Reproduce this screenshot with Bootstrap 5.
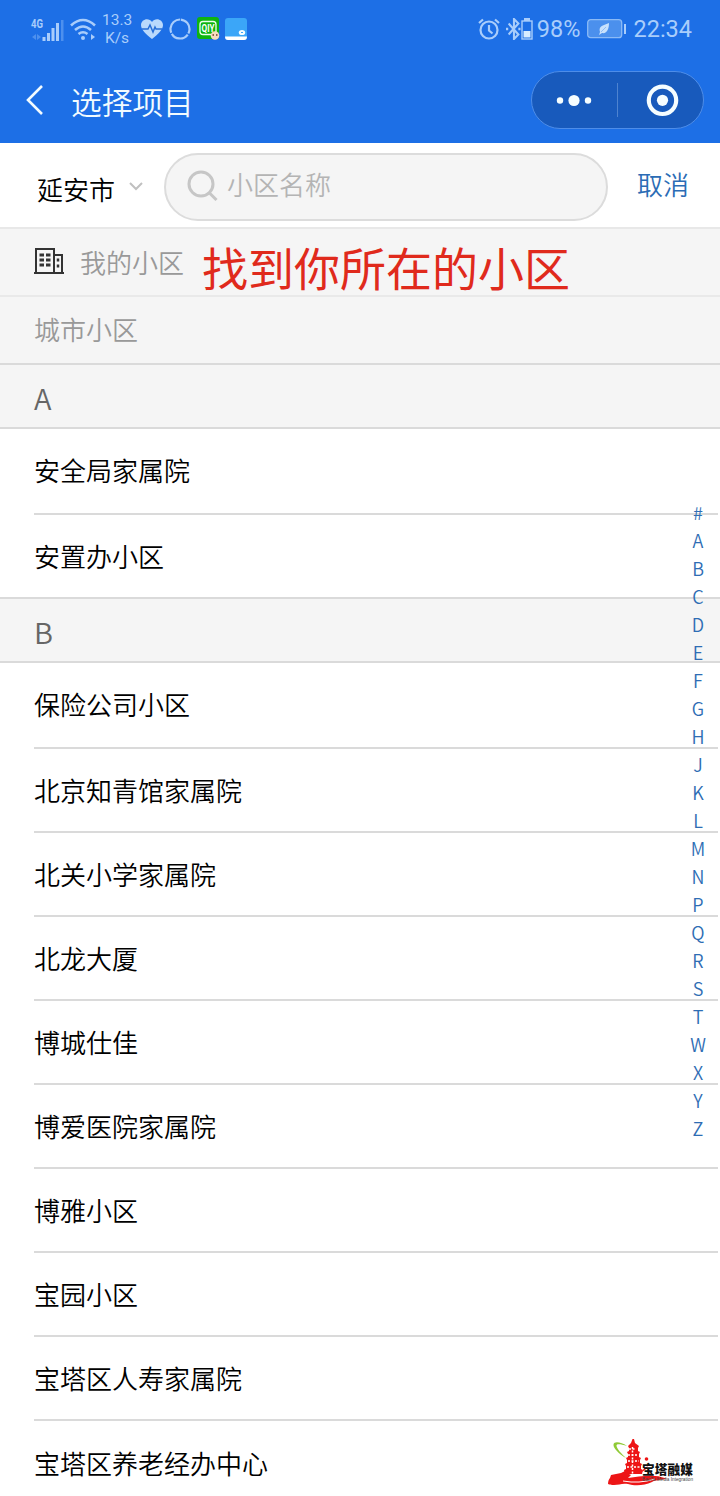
<!DOCTYPE html>
<html lang="zh-CN">
<head>
<meta charset="utf-8">
<meta name="viewport" content="width=device-width, initial-scale=1">
<title>选择项目</title>
<link href="https://cdn.jsdelivr.net/npm/bootstrap@5.3.0/dist/css/bootstrap.min.css" rel="stylesheet">
<style>
  body { font-family: "Noto Sans CJK SC", sans-serif; font-size: 26px; font-weight: 350; line-height: 1; color: #000; background: #fff; }
  svg { display: block; flex: none; }
  .screen { width: 720px; height: 1496px; }
  .app-header { height: 143px; background: #1d6fe6; }
  .status { height: 57px; padding: 0 28px 0 31px; color: #a9cdfb; font-family: Roboto, sans-serif; font-weight: 400; }
  .speed { font-size: 15.500px; line-height: 18px; width: 30px; margin: 0 9px 0 7px; padding-top: 1px; }
  .status-num { font-size: 23.500px; padding-top: 2px; }
  .title-bar { height: 86px; padding: 0 16px 1px 25px; color: #f2fbff; }
  .page-title { font-size: 30.7px; margin-left: 27px; padding-top: 3px; }
  .capsule { width: 173px; height: 58px; background: #185abc; border: 1px solid #4e8de8; border-radius: 29px; }
  .search-row { height: 86px; padding: 3px 31px 0 37px; border-bottom: 2px solid #e8e8e8; }
  .search-box { width: 444px; height: 68px; margin-left: 21px; padding-left: 21px; background: #f5f5f5; border: 2px solid #dcdcdc; border-radius: 34px; color: #b4b4b4; }
  .cancel { color: #2b6cb5; margin-left: 29px; }
  .mine { height: 68px; padding-left: 34px; background: #f5f5f5; border-bottom: 2px solid #e9e9e9; color: #999; }
  .note { color: #e02a1c; font-size: 46px; font-weight: 400; margin-left: 18px; padding-top: 7px; }
  .city { height: 68px; padding: 0 0 2px 34px; background: #f5f5f5; border-bottom: 2px solid #dadada; color: #999; }
  .group-head { height: 64px; padding: 2px 0 0 34px; background: #f5f5f5; border-bottom: 2px solid #dadada; color: #666; font-size: 29px; }
  .estates .list-group-item { height: 84px; margin: 0 2px 0 34px; padding: 0; border: 0; border-bottom: 2px solid #dadada; color: #000; border-radius: 0; background: none; }
  .estates .list-group-item:first-child { height: 86px; padding: 0 0 2px; }
  .estates.closed { border-bottom: 2px solid #dadada; border-radius: 0; }
  .estates.closed .list-group-item:last-child { height: 82px; border-bottom: 0; }
  .letters { top: 498px; right: 12px; width: 20px; font-size: 18px; line-height: 28px; color: #2e6db4; }
  .brand { left: 606px; top: 1436px; }
</style>
</head>
<body>
<main class="screen position-relative overflow-hidden">
  <header class="app-header">
    <div class="status d-flex align-items-center">
      <svg width="33" height="26" viewBox="0 0 33 26" fill="currentColor"><text x="0" y="12" font-size="13" font-weight="700" textLength="12" lengthAdjust="spacingAndGlyphs">4G</text><path d="M11.500 21h3v4h-3zM16 17h3v8h-3zM20.500 12h3v13h-3zM25 7h3v18h-3z"/><path opacity=".35" d="M30 4h2.500v21H30zM1 21l4-3v6zM10 21l-4-3v6z"/></svg>
      <svg width="28" height="24" viewBox="0 0 28 24" fill="none" stroke="currentColor" stroke-width="2.600" style="margin-left:5px;margin-right:-2px"><path d="M2 8.500Q14-2.500 26 8.500M6 13Q14 6 22 13M9.500 17Q14 13.500 18.500 17"/><circle cx="14" cy="21" r="2" fill="currentColor" stroke="none"/><path d="M22 17v6l4-3z" fill="currentColor" stroke="none"/></svg>
      <div class="speed text-center">13.3<br>K/s</div>
      <svg width="22" height="20" viewBox="0 0 22 20"><path fill="#bad9fc" d="M11 20C5 15 0 11 0 6 0 0 8-2 11 3c3-5 11-3 11 3 0 5-5 9-11 14z"/><path d="M1 10h6l2-4 3 7 2-5 1 2h6" fill="none" stroke="#286fd7" stroke-width="1.500"/></svg>
      <svg width="22" height="22" viewBox="0 0 22 22" fill="none" stroke="currentColor" stroke-width="2.200" style="margin-left:6px"><circle cx="11" cy="11" r="9.500" stroke-dasharray="18.700 1.200" transform="rotate(-85 11 11)"/></svg>
      <svg width="23" height="23" viewBox="0 0 23 23" style="margin-left:6px"><rect width="22" height="22" rx="3" fill="#0eb40f"/><rect x="3" y="4.500" width="16" height="13" rx="3" fill="none" stroke="#eaffea" stroke-width="1.300"/><text x="4.500" y="15" fill="#fff" font-size="10.500" font-weight="700" textLength="13" lengthAdjust="spacingAndGlyphs">QIY</text><circle cx="18" cy="18.500" r="4.300" fill="#f5dcc0"/><path d="M15.500 18h1.500m2 0h1.500" stroke="#6c3829" stroke-width="1.500"/></svg>
      <svg width="22" height="22" viewBox="0 0 22 22" style="margin-left:5px"><rect width="22" height="22" rx="3" fill="#3ba6f8"/><path d="M0 18.500h22q0 3.500-3 3.500H3q-3 0-3-3.500z" fill="#fff"/><ellipse cx="17" cy="14.500" rx="3.200" ry="2.600" fill="#f5fcff"/><path d="M16 14.500h2" stroke="#3ba6f8"/></svg>
      <div class="d-flex align-items-center ms-auto">
        <svg width="22" height="22" viewBox="0 0 22 22" fill="none" stroke="currentColor" stroke-width="2.200"><circle cx="11" cy="12" r="8.500"/><path d="M11 7v5.500l3.500 3M1 5l4-3.500M21 5l-4-3.500"/></svg>
        <svg width="15" height="22" viewBox="0 0 17 22" preserveAspectRatio="none" fill="none" stroke="currentColor" stroke-width="2.300" style="margin-left:6px"><path d="M3 5.500l11 11L9 21V1l5 4.500-11 11M0 11h2.500m11.500 0h2.500"/></svg>
        <svg width="12" height="22" viewBox="0 0 12 22"><path d="M3 0h6v3H3z" fill="currentColor"/><rect x="1" y="3" width="10" height="18" fill="none" stroke="currentColor" stroke-width="1.400"/><path d="M2.500 13h7v6.500h-7z" fill="#d9edff"/></svg>
        <span class="status-num" style="margin-left:4px">98%</span>
        <svg width="40" height="20" viewBox="0 0 40 20" style="margin-left:7px"><rect x=".7" y=".7" width="34" height="18" rx="3" fill="#4b90ed" stroke="#8bbaf6" stroke-width="1.300"/><path d="M37 5h2v10h-2z" fill="#a9cdfb"/><path d="M12 16l1-3c-2-6 4-7 9-9 0 6-2 11-7 10z" fill="#c8e1fc"/><path d="M14 13l5-5" stroke="#78acf2" stroke-width=".7"/></svg>
        <span class="status-num" style="margin-left:6px">22:34</span>
      </div>
    </div>
    <div class="title-bar d-flex align-items-center">
      <svg width="19" height="32" viewBox="0 0 19 32" fill="none" stroke="currentColor" stroke-width="2.600"><path d="M17 2L3 16l14 14"/></svg>
      <span class="page-title">选择项目</span>
      <div class="capsule d-flex align-items-center ms-auto">
        <svg width="171" height="56" viewBox="0 0 171 56" fill="#f5fdff"><circle cx="28" cy="28.500" r="3.200"/><circle cx="42" cy="28.500" r="5.600"/><circle cx="56" cy="28.500" r="3.200"/><path d="M85 11h1v34h-1z" fill="#4e83d0"/><circle cx="130.500" cy="28.300" r="13.700" fill="none" stroke="#f5fdff" stroke-width="4.200"/><circle cx="130.500" cy="28.300" r="5.600"/></svg>
      </div>
    </div>
  </header>

  <div class="search-row d-flex align-items-center">
    <span class="pt-1">延安市</span>
    <svg width="14" height="9" viewBox="0 0 14 9" fill="none" stroke="#c0c0c0" stroke-width="2" style="margin-left:14px"><path d="M1 1l6 6 6-6"/></svg>
    <div class="search-box d-flex align-items-center">
      <svg width="31" height="34" viewBox="0 0 31 34" fill="none" stroke="#c6c6c6" stroke-width="3"><circle cx="14" cy="14" r="12"/><path d="M21.500 22l8 8"/></svg>
      <span style="margin-left:9px;padding-bottom:5px">小区名称</span>
    </div>
    <span class="cancel" style="padding-bottom:5px">取消</span>
  </div>

  <div class="mine d-flex align-items-center">
    <svg width="30" height="28" viewBox="0 0 30 28" fill="none" stroke="#333" stroke-width="2"><path d="M2 25V1h18v24M20 7h8v18M0 25h30"/><path d="M5.500 7h4.500m2 0h4.500m-11 5h4.500m2 0h4.500m-11 5h4.500m2 0h4.500" stroke-width="3"/><path d="M24 10.500v3m0 3v3" stroke-width="2.500"/></svg>
    <span style="margin-left:16px">我的小区</span>
    <span class="note">找到你所在的小区</span>
  </div>
  <div class="city d-flex align-items-center">城市小区</div>

  <div class="group-head d-flex align-items-center">A</div>
  <ul class="estates closed list-group list-group-flush">
    <li class="list-group-item d-flex align-items-center">安全局家属院</li>
    <li class="list-group-item d-flex align-items-center">安置办小区</li>
  </ul>
  <div class="group-head d-flex align-items-center">B</div>
  <ul class="estates list-group list-group-flush">
    <li class="list-group-item d-flex align-items-center">保险公司小区</li>
    <li class="list-group-item d-flex align-items-center">北京知青馆家属院</li>
    <li class="list-group-item d-flex align-items-center">北关小学家属院</li>
    <li class="list-group-item d-flex align-items-center">北龙大厦</li>
    <li class="list-group-item d-flex align-items-center">博城仕佳</li>
    <li class="list-group-item d-flex align-items-center">博爱医院家属院</li>
    <li class="list-group-item d-flex align-items-center">博雅小区</li>
    <li class="list-group-item d-flex align-items-center">宝园小区</li>
    <li class="list-group-item d-flex align-items-center">宝塔区人寿家属院</li>
    <li class="list-group-item d-flex align-items-center">宝塔区养老经办中心</li>
  </ul>

  <nav class="letters position-absolute d-flex flex-column text-center">
    <span>#</span><span>A</span><span>B</span><span>C</span><span>D</span><span>E</span><span>F</span><span>G</span><span>H</span><span>J</span><span>K</span><span>L</span><span>M</span><span>N</span><span>P</span><span>Q</span><span>R</span><span>S</span><span>T</span><span>W</span><span>X</span><span>Y</span><span>Z</span>
  </nav>

  <svg class="brand position-absolute" width="100" height="56" viewBox="0 0 100 56">
    <path d="M20 22C13 18 7 12 7.500 8.500 8 5 15 6 21 10 15 8 10.500 7.500 10.500 9.500c0 3 4.500 8 9.500 12.500z" fill="#8fca35"/>
    <g fill="#ed1516">
      <path d="M26.500 3h1.500l1 4 4 3-1 2v3l2 1-1 2v3l2 1-1 2v3l2 1-1 2v3l2 1-1 4H19l-1-4 2-1v-3l-1-2 2-1v-3l-1-2 2-1v-3l-1-2 2-1v-3l-1-2 3-3z"/>
      <path d="M2 48c0-3 1-5 2-6l1-3 10-2 6-3 3 1-1 3 2 1-3 3c9-1 18-3 27-2 5 0 9 2 12 3-7 1-12 1-15 3-8 4-18 4-24 2-6-1-9 1-14 1s-5-1-6-1z"/>
      <circle cx="40.500" cy="23" r="1.800"/><path d="M42 30q-2 4-6 6 1-4 6-6z"/>
    </g>
    <path d="M23 13h7M22 19h10M22 25h11M21 31h13M26.500 11v28" stroke="#fff" stroke-width="1.500" fill="none" stroke-dasharray="2 1.500"/>
    <path d="M17 45q16 3 32-2" stroke="#fff" fill="none"/>
    <text x="36" y="38" font-family="Noto Sans CJK SC" font-weight="900" font-size="12.700" textLength="51" fill="#111">宝塔融媒</text>
    <text x="36" y="44.500" font-family="Liberation Sans" font-size="5.500" fill="#444" textLength="51" lengthAdjust="spacingAndGlyphs">BaoTa Media Integration</text>
  </svg>
</main>
<script src="https://cdn.jsdelivr.net/npm/bootstrap@5.3.0/dist/js/bootstrap.bundle.min.js"></script>
</body>
</html>
